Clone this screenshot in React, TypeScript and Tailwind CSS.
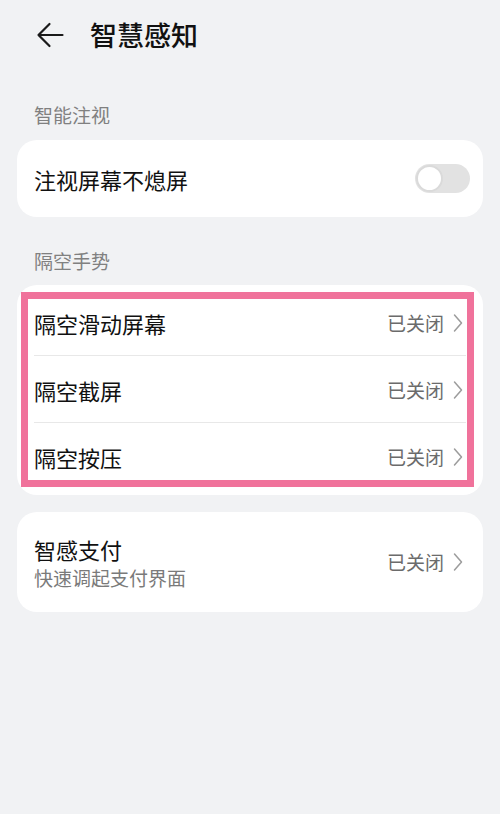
import React from "react";

const font = { fontFamily: '"Noto Sans CJK SC", "Noto Sans", sans-serif' };

function Chevron() {
  return (
    <svg width="12" height="20" viewBox="0 0 12 20" className="ml-[8px]">
      <polyline points="2.5,2 9.5,10 2.5,18" fill="none" stroke="#9c9c9c" strokeWidth="1.5" strokeLinecap="round" strokeLinejoin="round" />
    </svg>
  );
}

function Value() {
  return (
    <div className="flex items-center">
      <span className="text-[19px] leading-[24px] text-[#6b6b6b]">已关闭</span>
      <Chevron />
    </div>
  );
}

function Row({ label, divider }: { label: string; divider?: boolean }) {
  return (
    <div className="relative flex h-[67px] items-center justify-between pl-[17px] pr-[19px]">
      <span className="text-[22px] leading-[28px] text-[#111]">{label}</span>
      <Value />
      {divider && <div className="absolute bottom-0 left-[17px] right-[17px] h-px bg-[#e8e8e8]" />}
    </div>
  );
}

export default function App() {
  return (
    <div className="min-h-[814px] w-[500px] bg-[#f1f2f4] px-[17px]" style={font}>
      <div className="flex h-[70px] items-center">
        <svg width="28" height="26" viewBox="0 0 28 26" className="ml-[19px]">
          <path d="M26.5 13H2.5M13.5 2L2.5 13L13.5 24" fill="none" stroke="#1a1a1a" strokeWidth="2.2" strokeLinecap="round" strokeLinejoin="round" />
        </svg>
        <span className="ml-[26px] text-[27px] leading-[34px] font-medium text-[#111]">智慧感知</span>
      </div>

      <div className="pt-[33px] pb-[13px] pl-[17px] text-[19px] leading-[24px] text-[#808080]">智能注视</div>

      <div className="flex h-[77px] items-center justify-between rounded-[20px] bg-white pl-[17px] pr-[13px]">
        <span className="text-[22px] leading-[28px] text-[#111]">注视屏幕不熄屏</span>
        <div className="relative h-[29px] w-[55px] rounded-full bg-[#e2e2e2]">
          <div className="absolute left-[1px] top-[1px] h-[27px] w-[27px] rounded-full border-2 border-[#dadada] bg-white" />
        </div>
      </div>

      <div className="pt-[32px] pb-[12px] pl-[17px] text-[19px] leading-[24px] text-[#808080]">隔空手势</div>

      <div className="relative rounded-[20px] bg-white pt-[4px] pb-[5px]">
        <Row label="隔空滑动屏幕" divider />
        <Row label="隔空截屏" divider />
        <Row label="隔空按压" />
        <div className="absolute left-[4px] top-[7px] h-[195px] w-[453px] border-[7px] border-[#f0729b]" />
      </div>

      <div className="mt-[17px] flex h-[100px] items-center justify-between rounded-[20px] bg-white pl-[17px] pr-[19px]">
        <div className="flex flex-col">
          <span className="text-[22px] leading-[28px] text-[#111]">智感支付</span>
          <span className="mt-[3px] text-[19px] leading-[24px] text-[#7a7a7a]">快速调起支付界面</span>
        </div>
        <Value />
      </div>
    </div>
  );
}
